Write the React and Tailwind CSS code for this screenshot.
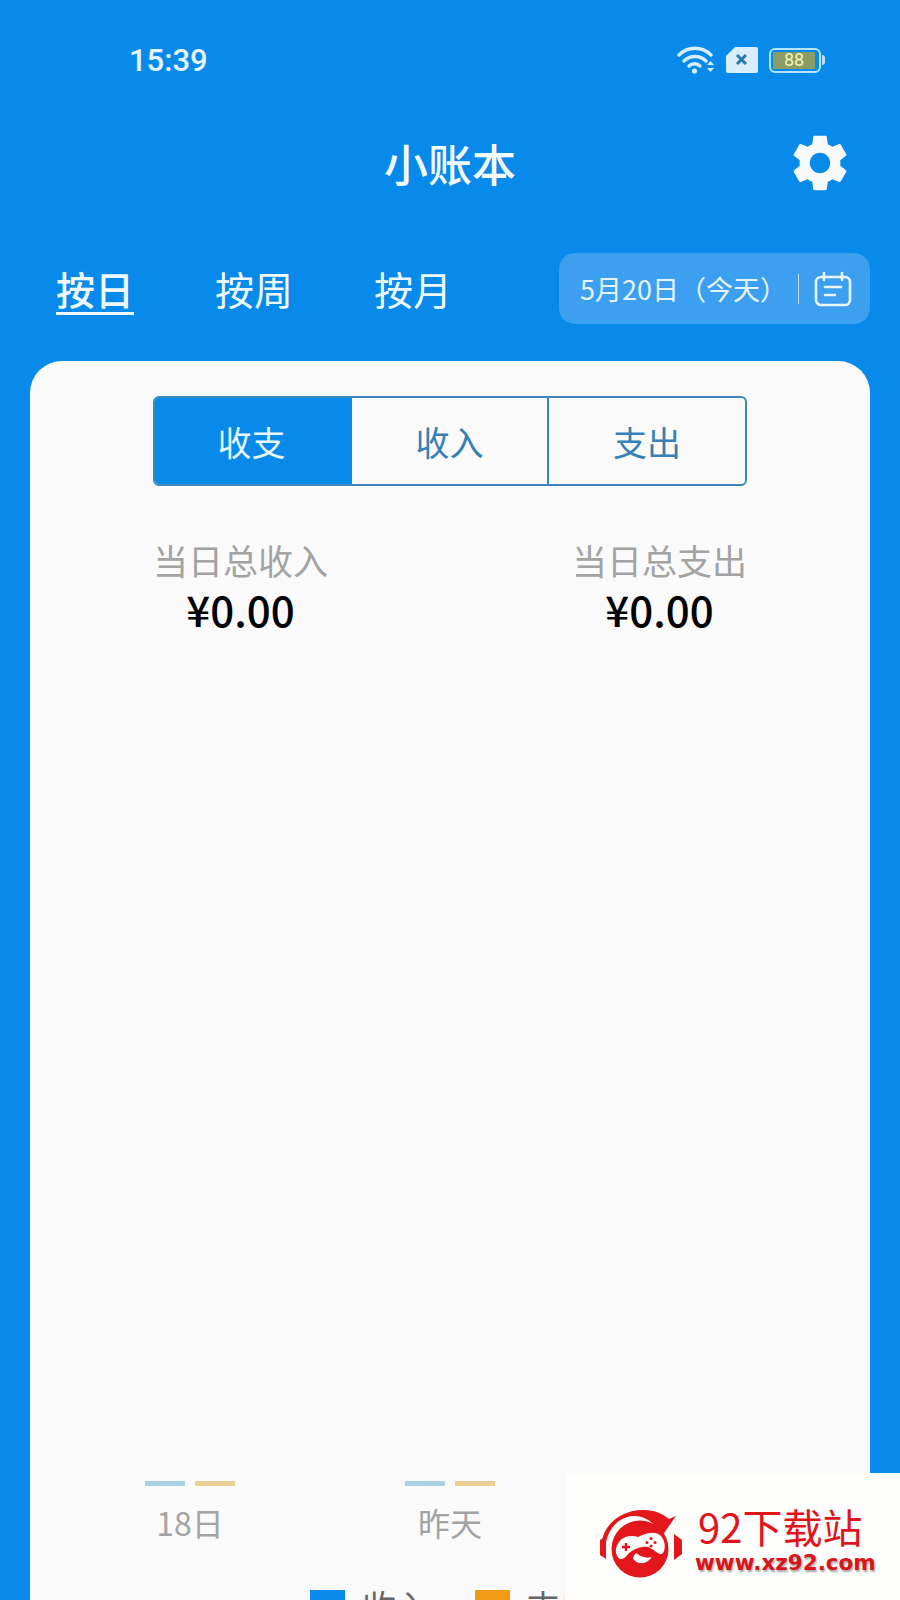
import { MdSettings } from 'react-icons/md';

const Logo = () => (
  <svg width="82" height="70" viewBox="0 0 82 70" className="shrink-0">
    {/* ear cups */}
    <path d="M6 27 L0 31 L0 46 L6 50 Z" fill="#e3161b" />
    <path d="M74 25 L82 31 L82 45 L74 51 Z" fill="#e3161b" />
    {/* headband swoosh */}
    <path d="M2 32 C5 12 26 0 44 1 C55 1 63 5 69 10 L76 7 L62 27 C56 14 44 6 33 7 C20 8 9 18 6 33 Z" fill="#e3161b" />
    <circle cx="40" cy="40" r="28.5" fill="#e3161b" />
    {/* controller */}
    <path d="M19 33 C23 27 32 26 38 28 C46 24 54 22 60 26 C66 31 66 42 62 45 C58 46 54 40 48 38 C42 37 34 40 29 44 C25 50 20 52 18 48 C15 44 15 38 19 33 Z" fill="#fff" />
    <path d="M22 38 h8 M26 34 v8" stroke="#e3161b" strokeWidth="2.4" />
    <circle cx="51" cy="29.500" r="1.500" fill="#e3161b" />
    <circle cx="55" cy="33.500" r="1.500" fill="#e3161b" />
    <circle cx="51" cy="37" r="1.500" fill="#e3161b" />
    <circle cx="47" cy="33.500" r="1.500" fill="#e3161b" />
    {/* chin */}
    <path d="M33 50 C38 56 46 56 52 48 C46 50 40 47 36 44 C34 46 33 48 33 50 Z" fill="#fff" />
  </svg>
);

const Bars = () => (
  <div className="flex justify-center gap-[10px]">
    <div className="w-[40px] h-[5px] bg-[#a9d0e2]" />
    <div className="w-[40px] h-[5px] bg-[#eccf95]" />
  </div>
);

export default function App() {
  return (
    <div className="relative w-[900px] h-[1600px] overflow-hidden flex flex-col bg-[#078aea] text-white font-['Noto_Sans_CJK_SC',sans-serif]">
      {/* Status bar */}
      <div className="h-[120px] shrink-0 flex items-center pl-[129px] pr-[75px]">
        <span className="mt-[2px] text-[31px] font-medium font-['Roboto',sans-serif] text-[#e6f4ff]">15:39</span>
        <div className="ml-auto flex items-center gap-[11px] text-[#d8eefc]">
          <svg width="38" height="30" viewBox="0 0 38 30" fill="none" stroke="currentColor" strokeWidth="3.4" strokeLinecap="round">
            <path d="M2 10 C11 1 25 1 34 10" />
            <path d="M7 16 C13 10 23 10 29 16" />
            <path d="M12 21 C15 18 20 18 23 21" />
            <circle cx="17.5" cy="26" r="2.6" fill="currentColor" stroke="none" />
            <path d="M30 20 L33.500 16 L37 20 Z M30 23 L37 23 L33.500 27 Z" fill="currentColor" stroke="none" />
          </svg>
          <svg width="32" height="26" viewBox="0 0 32 26">
            <path d="M9 0 H30 Q32 0 32 2 V24 Q32 26 30 26 H2 Q0 26 0 24 V9 Z" fill="#d8eefc" />
            <path d="M11 8 L20 17 M20 8 L11 17" stroke="#2a78b0" strokeWidth="3" />
          </svg>
          <div className="flex items-center">
            <div className="w-[52px] h-[25px] rounded-[6px] border-2 border-[#b5e4f8] p-[2px]">
              <div className="w-[42px] h-full bg-[#8b9d66] flex items-center justify-center text-[18px] leading-none font-['Roboto',sans-serif] text-[#f4f3b0]">88</div>
            </div>
            <div className="w-[3px] h-[10px] bg-[#b5e4f8] rounded-r-sm ml-[1px]" />
          </div>
        </div>
      </div>

      {/* Title */}
      <div className="h-[86px] shrink-0 grid grid-cols-3 items-center">
        <div />
        <div className="text-center text-[44px] leading-none font-medium text-[#f4fbff]">小账本</div>
        <div className="flex justify-end pr-[46px]">
          <MdSettings size={68} color="#f7fbfe" />
        </div>
      </div>

      {/* Tabs and date */}
      <div className="mt-[47px] h-[71px] shrink-0 flex items-center pl-[56px] pr-[30px]">
        <div className="flex gap-[81px] text-[39px] leading-none text-[#eef8ff]">
          <span className="underline underline-offset-[7px] decoration-[3px] font-medium">按日</span>
          <span>按周</span>
          <span>按月</span>
        </div>
        <div className="ml-auto w-[311px] h-full rounded-[16px] bg-[#3d9fef] flex items-center pl-[21px]">
          <span className="text-[27px] leading-none whitespace-nowrap text-[#e4f3fd] w-[218px]">5月20日（今天）</span>
          <div className="w-px h-[30px] bg-[#bfe2f9]" />
          <svg width="38" height="36" viewBox="0 0 38 36" fill="none" stroke="#e8f5fe" strokeWidth="2.6" strokeLinecap="round" className="ml-[15px]">
            <rect x="2" y="6" width="34" height="28" rx="5" />
            <path d="M10 2 V9 M28 2 V9 M11 16 H27 M11 24 H21" />
          </svg>
        </div>
      </div>

      {/* Card */}
      <div className="mt-[37px] mx-[30px] flex-1 flex flex-col rounded-t-[32px] bg-[#fafafa]">
        <div className="mt-[35px] mx-[123px] h-[90px] shrink-0 flex rounded-[6px] border-2 border-[#3a87b8] overflow-hidden text-[34px]">
          <div className="w-[197px] pr-[4px] bg-[#078aea] text-[#e8f6ff] flex items-center justify-center">收支</div>
          <div className="w-[197px] border-r-2 border-[#3a87b8] text-[#3580b4] flex items-center justify-center">收入</div>
          <div className="flex-1 text-[#3580b4] flex items-center justify-center">支出</div>
        </div>

        <div className="mt-[54px] mx-[123px] flex justify-between">
          <div className="flex flex-col items-center">
            <div className="text-[35px] leading-[40px] text-[#a3a3a3]">当日总收入</div>
            <div className="mt-[7px] text-[42px] leading-[44px] font-medium text-black">¥0.00</div>
          </div>
          <div className="flex flex-col items-center">
            <div className="text-[35px] leading-[40px] text-[#a3a3a3]">当日总支出</div>
            <div className="mt-[7px] text-[42px] leading-[44px] font-medium text-black">¥0.00</div>
          </div>
        </div>

        <div className="flex-1" />

        <div className="grid grid-cols-3 px-[30px]">
          <div>
            <Bars />
            <div className="mt-[16px] text-center text-[32px] leading-[40px] text-[#a3a3a3]">18日</div>
          </div>
          <div>
            <Bars />
            <div className="mt-[16px] text-center text-[32px] leading-[40px] text-[#a3a3a3]">昨天</div>
          </div>
        </div>

        {/* Legend, cut off by the bottom of the screen */}
        <div className="mt-[48px] h-[10px] flex justify-center gap-[45px] pl-[4px] text-[34px] leading-[40px] text-[#666666]">
          <div className="flex items-start gap-[17px]">
            <div className="w-[35px] h-[35px] bg-[#078aea]" />
            <span className="-mt-[4px]">收入</span>
          </div>
          <div className="flex items-start gap-[16px]">
            <div className="w-[35px] h-[35px] bg-[#f19a16]" />
            <span className="-mt-[4px]">支出</span>
          </div>
        </div>
      </div>

      {/* Watermark */}
      <div className="absolute right-0 bottom-0 w-[335px] h-[127px] bg-[#fefefc] flex items-center pl-[35px] pt-[14px]">
        <Logo />
        <div className="ml-[16px] -mt-[8px] flex flex-col">
          <div className="text-[40px] leading-[40px] text-[#e0141a] whitespace-nowrap">92下载站</div>
          <div className="-ml-[3px] mt-[6px] text-[21.5px] leading-[22px] font-bold whitespace-nowrap text-[#d9141a] font-['DejaVu_Sans',sans-serif] [text-shadow:1px_2px_2px_rgba(0,0,0,0.35)]">www.xz92.com</div>
        </div>
      </div>
    </div>
  );
}
